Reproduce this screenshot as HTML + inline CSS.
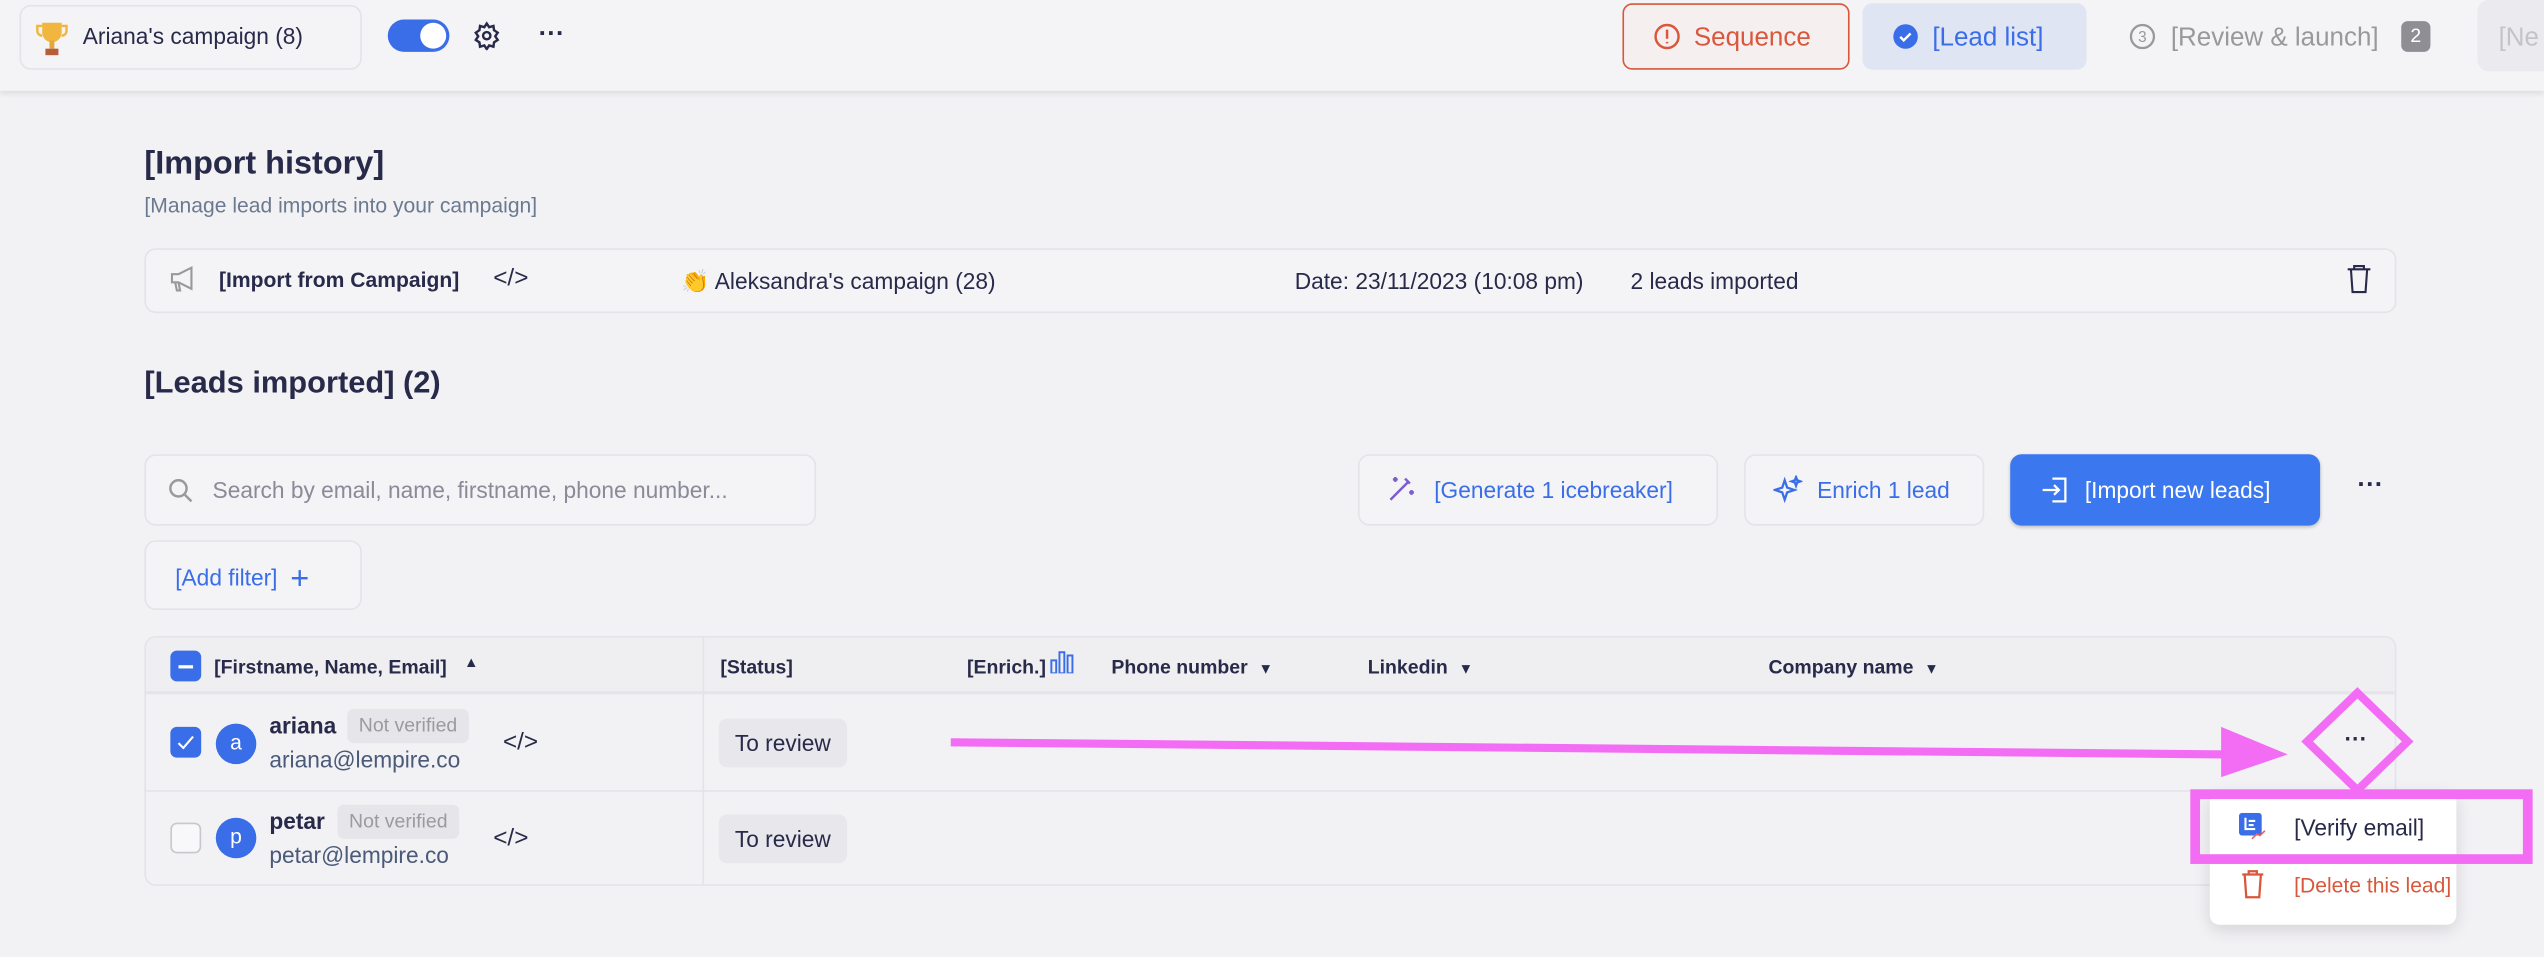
<!DOCTYPE html>
<html><head><meta charset="utf-8"><style>
*{box-sizing:border-box;margin:0;padding:0}
html,body{width:2544px;height:956px;overflow:hidden;background:#f2f1f4}
#w{position:absolute;left:0;top:0;width:1568px;height:590px;transform:scale(1.62245);transform-origin:0 0;font-family:"Liberation Sans",sans-serif;color:#282a4a}
.a{position:absolute}
.box{position:absolute;border:1px solid #e4e3e8;border-radius:7px;background:#f4f3f6}
.t{position:absolute;white-space:nowrap}
</style></head><body><div id="w">
<div class="a" style="left:0;top:0;width:1568px;height:56px;background:#f4f3f6;box-shadow:0 2px 3px rgba(0,0,0,.08)"></div>
<div class="box" style="left:12px;top:3px;width:211px;height:40px"></div>
<svg class="a" style="left:22px;top:13px" width="20" height="22" viewBox="0 0 20 22"><path d="M4 1h12v6a6 6 0 0 1-12 0z" fill="#f0b640"/><path d="M4 3H1v3a3 3 0 0 0 3 3M16 3h3v3a3 3 0 0 1-3 3" fill="none" stroke="#f0b640" stroke-width="1.5"/><rect x="8.5" y="12" width="3" height="5" fill="#e3a73a"/><rect x="6" y="17" width="8" height="4" fill="#b85d3a"/></svg>
<div class="t" style="left:51px;top:14px;font-size:14px">Ariana's campaign (8)</div>
<div class="a" style="left:239px;top:12px;width:38px;height:20px;border-radius:10px;background:#3a6ee8"></div>
<div class="a" style="left:259px;top:14px;width:16px;height:16px;border-radius:50%;background:#fff"></div>
<svg class="a" style="left:291px;top:13px" width="18" height="18" viewBox="0 0 24 24" fill="none" stroke="#282a4a" stroke-width="2"><circle cx="12" cy="12" r="3"/><path d="M12 2l2 3 3.5-1 .5 3.5 3 2-2 3 2 3-3 2-.5 3.5-3.5-1-2 3-2-3-3.5 1-.5-3.5-3-2 2-3-2-3 3-2 .5-3.5 3.5 1z"/></svg>
<div class="t" style="left:332px;top:13px;font-size:16px;font-weight:bold">···</div>
<div class="a" style="left:1000px;top:2px;width:140px;height:41px;border:1px solid #d9573b;border-radius:6px;background:#f6efef"></div>
<svg class="a" style="left:1019px;top:14px" width="17" height="17" viewBox="0 0 18 18" fill="none" stroke="#d9573b" stroke-width="1.6"><circle cx="9" cy="9" r="7.5"/><path d="M9 4.5v6M9 12.5v1"/></svg>
<div class="t" style="left:1044px;top:15px;font-size:16px;color:#d9573b">Sequence</div>
<div class="a" style="left:1148px;top:2px;width:138px;height:41px;border-radius:6px;background:#dfe5f3"></div>
<svg class="a" style="left:1166px;top:14px" width="17" height="17" viewBox="0 0 18 18"><circle cx="9" cy="9" r="8" fill="#3a6ee8"/><path d="M5.5 9.2l2.3 2.3 4.5-4.5" fill="none" stroke="#fff" stroke-width="1.6"/></svg>
<div class="t" style="left:1191px;top:15px;font-size:16px;color:#3a6ee8">[Lead list]</div>
<svg class="a" style="left:1312px;top:14px" width="17" height="17" viewBox="0 0 18 18"><circle cx="9" cy="9" r="7.5" fill="none" stroke="#999" stroke-width="1.5"/><text x="9" y="12.5" font-size="10" text-anchor="middle" fill="#999" font-family="Liberation Sans">3</text></svg>
<div class="t" style="left:1338px;top:15px;font-size:16px;color:#999">[Review &amp; launch]</div>
<div class="a" style="left:1480px;top:13px;width:18px;height:19px;border-radius:4px;background:#8e8e94;color:#fff;font-size:12px;text-align:center;line-height:19px">2</div>
<div class="a" style="left:1527px;top:0;width:50px;height:44px;border-radius:7px;background:#ebeaee"></div>
<div class="t" style="left:1540px;top:15px;font-size:16px;color:#c4c4c8">[Ne</div>

<div class="t" style="left:89px;top:90px;font-size:20px;font-weight:bold">[Import history]</div>
<div class="t" style="left:89px;top:119px;font-size:13px;color:#6b7a90">[Manage lead imports into your campaign]</div>
<div class="box" style="left:89px;top:153px;width:1388px;height:40px"></div>
<svg class="a" style="left:104px;top:163px" width="18" height="18" viewBox="0 0 18 18" fill="none" stroke="#999" stroke-width="1.3"><path d="M2 6h4l8-4v13l-8-4H2zM4 11l1 5h2l-1-5"/></svg>
<div class="t" style="left:135px;top:165px;font-size:13px;font-weight:bold">[Import from Campaign]</div>
<div class="t" style="left:304px;top:163px;font-size:15px">&lt;/&gt;</div>
<div class="t" style="left:420px;top:165px;font-size:14px">👏 Aleksandra's campaign (28)</div>
<div class="t" style="left:798px;top:165px;font-size:14px">Date: 23/11/2023 (10:08 pm)</div>
<div class="t" style="left:1005px;top:165px;font-size:14px">2 leads imported</div>
<svg class="a" style="left:1446px;top:163px" width="16" height="18" viewBox="0 0 16 18" fill="none" stroke="#282a4a" stroke-width="1.3"><path d="M1 3h14M5 3V1h6v2M3 3l1 14h8l1-14"/></svg>

<div class="t" style="left:89px;top:226px;font-size:19px;font-weight:bold">[Leads imported] (2)</div>
<div class="box" style="left:89px;top:280px;width:414px;height:44px"></div>
<svg class="a" style="left:103px;top:294px" width="16" height="16" viewBox="0 0 16 16" fill="none" stroke="#999" stroke-width="1.5"><circle cx="7" cy="7" r="5"/><path d="M11 11l4 4"/></svg>
<div class="t" style="left:131px;top:294px;font-size:14px;color:#8a8a98">Search by email, name, firstname, phone number...</div>
<div class="box" style="left:837px;top:280px;width:222px;height:44px"></div>
<svg class="a" style="left:855px;top:292px" width="18" height="18" viewBox="0 0 18 18" fill="none" stroke="#7a5bd0" stroke-width="1.5"><path d="M2 16L13 5M11 3l3 3M5 2v3M3.5 3.5h3M15 10v3M13.5 11.5h3"/></svg>
<div class="t" style="left:884px;top:294px;font-size:14px;color:#3a6ee8">[Generate 1 icebreaker]</div>
<div class="box" style="left:1075px;top:280px;width:148px;height:44px"></div>
<svg class="a" style="left:1093px;top:293px" width="18" height="18" viewBox="0 0 18 18" fill="none" stroke="#3a6ee8" stroke-width="1.4"><path d="M7 3l1.5 4.5L13 9l-4.5 1.5L7 15l-1.5-4.5L1 9l4.5-1.5zM14 1l.7 2 2 .7-2 .7-.7 2-.7-2-2-.7 2-.7z"/></svg>
<div class="t" style="left:1120px;top:294px;font-size:14px;color:#3a6ee8">Enrich 1 lead</div>
<div class="a" style="left:1239px;top:280px;width:191px;height:44px;border-radius:7px;background:#3b78ef;box-shadow:0 1px 2px rgba(0,0,0,.2)"></div>
<svg class="a" style="left:1258px;top:293px" width="18" height="18" viewBox="0 0 18 18" fill="none" stroke="#fff" stroke-width="1.4"><path d="M7 2h8v14H7M1 9h10M8 6l3 3-3 3"/></svg>
<div class="t" style="left:1285px;top:294px;font-size:14px;color:#fff">[Import new leads]</div>
<div class="t" style="left:1453px;top:291px;font-size:16px;font-weight:bold">···</div>
<div class="box" style="left:89px;top:333px;width:134px;height:43px"></div>
<div class="t" style="left:108px;top:344px;font-size:14px;color:#3a6ee8">[Add filter] <span style="font-size:20px;position:relative;top:2px;margin-left:4px">+</span></div>

<div class="box" style="left:89px;top:392px;width:1388px;height:154px;background:#f2f1f4"></div>
<div class="a" style="left:90px;top:393px;width:1386px;height:35px;background:#efeef1;border-bottom:2px solid #e5e4e8;border-radius:6px 6px 0 0"></div>
<div class="a" style="left:90px;top:487px;width:1386px;height:1px;background:#e4e3e8"></div>
<div class="a" style="left:433px;top:393px;width:1px;height:152px;background:#e4e3e8"></div>
<div class="a" style="left:105px;top:401px;width:19px;height:19px;border-radius:4px;background:#3a6ee8"></div>
<div class="a" style="left:110px;top:410px;width:9px;height:2px;background:#fff"></div>
<div class="t" style="left:132px;top:404px;font-size:12px;font-weight:bold">[Firstname, Name, Email]</div>
<div class="t" style="left:286px;top:403px;font-size:9px">▲</div>
<div class="t" style="left:444px;top:404px;font-size:12px;font-weight:bold">[Status]</div>
<div class="t" style="left:596px;top:404px;font-size:12px;font-weight:bold">[Enrich.]</div>
<svg class="a" style="left:647px;top:401px" width="16" height="14" viewBox="0 0 16 14" fill="none" stroke="#3a6ee8" stroke-width="1.2"><rect x="1" y="6" width="3" height="8"/><rect x="6" y="1" width="3" height="13"/><rect x="11" y="3" width="3" height="11"/></svg>
<div class="t" style="left:685px;top:404px;font-size:12px;font-weight:bold">Phone number &nbsp;<span style="font-size:9px">▼</span></div>
<div class="t" style="left:843px;top:404px;font-size:12px;font-weight:bold">Linkedin &nbsp;<span style="font-size:9px">▼</span></div>
<div class="t" style="left:1090px;top:404px;font-size:12px;font-weight:bold">Company name &nbsp;<span style="font-size:9px">▼</span></div>

<div class="a" style="left:105px;top:448px;width:19px;height:19px;border-radius:4px;background:#3a6ee8"></div>
<svg class="a" style="left:105px;top:448px" width="19" height="19"><path d="M5 10l3 3 6-7" fill="none" stroke="#fff" stroke-width="1.3"/></svg>
<div class="a" style="left:133px;top:446px;width:25px;height:25px;border-radius:50%;background:#3a6ee8;color:#fff;font-size:13px;text-align:center;line-height:24px">a</div>
<div class="t" style="left:166px;top:439px;font-size:14px;font-weight:bold">ariana</div>
<div class="a" style="left:214px;top:437px;width:75px;height:21px;border-radius:4px;background:#e6e5e9;color:#9a9aa2;font-size:12px;text-align:center;line-height:21px">Not verified</div>
<div class="t" style="left:166px;top:460px;font-size:14px;color:#4a5a78">ariana@lempire.co</div>
<div class="t" style="left:310px;top:449px;font-size:15px">&lt;/&gt;</div>
<div class="a" style="left:443px;top:443px;width:79px;height:30px;border-radius:5px;background:#e8e7eb;font-size:14px;line-height:30px;text-align:center">To review</div>

<div class="a" style="left:105px;top:507px;width:19px;height:19px;border-radius:4px;border:1px solid #c8c8cc;background:#f8f8fa"></div>
<div class="a" style="left:133px;top:504px;width:25px;height:25px;border-radius:50%;background:#3a6ee8;color:#fff;font-size:13px;text-align:center;line-height:24px">p</div>
<div class="t" style="left:166px;top:498px;font-size:14px;font-weight:bold">petar</div>
<div class="a" style="left:208px;top:496px;width:75px;height:21px;border-radius:4px;background:#e6e5e9;color:#9a9aa2;font-size:12px;text-align:center;line-height:21px">Not verified</div>
<div class="t" style="left:166px;top:519px;font-size:14px;color:#4a5a78">petar@lempire.co</div>
<div class="t" style="left:304px;top:508px;font-size:15px">&lt;/&gt;</div>
<div class="a" style="left:443px;top:502px;width:79px;height:30px;border-radius:5px;background:#e8e7eb;font-size:14px;line-height:30px;text-align:center">To review</div>

<div class="a" style="left:1362px;top:488px;width:152px;height:82px;border-radius:6px;background:#fff;box-shadow:0 3px 10px rgba(0,0,0,.12)"></div>
<svg class="a" style="left:1380px;top:501px" width="17" height="17" viewBox="0 0 17 17"><rect x="0" y="0" width="14" height="14" rx="2" fill="#3a6ee8"/><path d="M4 3v7h6M6 5h4M6 7.5h3" stroke="#fff" stroke-width="1.3" fill="none"/><path d="M8 16l3-3 2 1 3-3" stroke="#e8606a" stroke-width="1" fill="none"/></svg>
<div class="t" style="left:1414px;top:502px;font-size:14px">[Verify email]</div>
<svg class="a" style="left:1381px;top:536px" width="15" height="18" viewBox="0 0 15 18" fill="none" stroke="#d9573b" stroke-width="1.4"><path d="M1 3h13M5 3V1h5v2M2.5 3l1 14h8l1-14"/></svg>
<div class="t" style="left:1414px;top:538px;font-size:13px;color:#d9573b">[Delete this lead]</div>
<div class="t" style="left:1445px;top:447px;font-size:14px;font-weight:bold">···</div>

<svg class="a" style="left:0;top:0" width="1568" height="590">
<path d="M586 457.5L1372 465" stroke="#f26cf4" stroke-width="5"/>
<path d="M1369 448L1410 465L1369 479z" fill="#f26cf4"/>
<path d="M1453 427L1484 457L1453 487L1422 457z" fill="none" stroke="#f26cf4" stroke-width="5"/>
<rect x="1353" y="489.5" width="205" height="40" fill="none" stroke="#f26cf4" stroke-width="6"/>
</svg>
</div></body></html>
